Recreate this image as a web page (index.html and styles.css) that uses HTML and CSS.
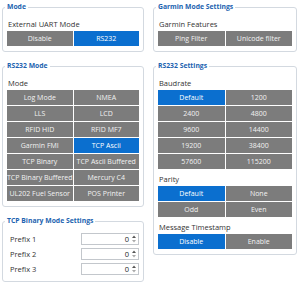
FILE: index.html
```html
<!DOCTYPE html>
<html>
<head>
<meta charset="utf-8">
<link rel="stylesheet" href="styles.css">
</head>
<body>
<div class="page">
  <div class="col left">
    <fieldset class="box">
      <legend>Mode</legend>
      <div class="lbl">External UART Mode</div>
      <div class="grid">
        <div class="btn">Disable</div>
        <div class="btn on">RS232</div>
      </div>
    </fieldset>
    <fieldset class="box">
      <legend>RS232 Mode</legend>
      <div class="lbl">Mode</div>
      <div class="grid">
        <div class="btn">Log Mode</div>
        <div class="btn">NMEA</div>
        <div class="btn">LLS</div>
        <div class="btn">LCD</div>
        <div class="btn">RFID HID</div>
        <div class="btn">RFID MF7</div>
        <div class="btn">Garmin FMI</div>
        <div class="btn on">TCP Ascii</div>
        <div class="btn">TCP Binary</div>
        <div class="btn">TCP Ascii Buffered</div>
        <div class="btn">TCP Binary Buffered</div>
        <div class="btn">Mercury C4</div>
        <div class="btn">UL202 Fuel Sensor</div>
        <div class="btn">POS Printer</div>
      </div>
    </fieldset>
    <fieldset class="box">
      <legend>TCP Binary Mode Settings</legend>
      <div class="rows">
        <div class="row"><span class="rlbl">Prefix 1</span><span class="spin"><span class="val">0</span><svg class="arrows" width="6" height="10" viewBox="0 0 6 10"><path d="M1 4 L3 1.5 L5 4 Z" fill="#555"/><path d="M1 6 L3 8.5 L5 6 Z" fill="#aaa"/></svg></span></div>
        <div class="row"><span class="rlbl">Prefix 2</span><span class="spin"><span class="val">0</span><svg class="arrows" width="6" height="10" viewBox="0 0 6 10"><path d="M1 4 L3 1.5 L5 4 Z" fill="#555"/><path d="M1 6 L3 8.5 L5 6 Z" fill="#aaa"/></svg></span></div>
        <div class="row"><span class="rlbl">Prefix 3</span><span class="spin"><span class="val">0</span><svg class="arrows" width="6" height="10" viewBox="0 0 6 10"><path d="M1 4 L3 1.5 L5 4 Z" fill="#555"/><path d="M1 6 L3 8.5 L5 6 Z" fill="#aaa"/></svg></span></div>
      </div>
    </fieldset>
  </div>
  <div class="col right">
    <fieldset class="box">
      <legend>Garmin Mode Settings</legend>
      <div class="lbl">Garmin Features</div>
      <div class="grid">
        <div class="btn">Ping Filter</div>
        <div class="btn">Unicode filter</div>
      </div>
    </fieldset>
    <fieldset class="box">
      <legend>RS232 Settings</legend>
      <div class="lbl">Baudrate</div>
      <div class="grid">
        <div class="btn on">Default</div>
        <div class="btn">1200</div>
        <div class="btn">2400</div>
        <div class="btn">4800</div>
        <div class="btn">9600</div>
        <div class="btn">14400</div>
        <div class="btn">19200</div>
        <div class="btn">38400</div>
        <div class="btn">57600</div>
        <div class="btn">115200</div>
      </div>
      <div class="lbl">Parity</div>
      <div class="grid">
        <div class="btn on">Default</div>
        <div class="btn">None</div>
        <div class="btn">Odd</div>
        <div class="btn">Even</div>
      </div>
      <div class="lbl">Message Timestamp</div>
      <div class="grid">
        <div class="btn on">Disable</div>
        <div class="btn">Enable</div>
      </div>
    </fieldset>
  </div>
</div>
</body>
</html>
```

FILE: styles.css
```css
html, body {
  margin: 0;
  padding: 0;
  background: #ffffff;
}
body {
  font-family: "Open Sans", "Noto Sans", sans-serif;
  font-size: 7px;
  color: #333333;
}
.page {
  display: flex;
  gap: 9px;
  padding: 1px 0 0 2px;
}
.col {
  display: flex;
  flex-direction: column;
  gap: 8px;
}
.left { width: 142px; }
.right { width: 144px; }
.box {
  margin: 0;
  border: 1px solid #d3d9e0;
  border-radius: 3px;
  padding: 1px 4px 5px;
  min-width: 0;
}
.box legend {
  padding: 0 2px;
  margin-left: -2px;
  font-weight: 700;
  font-size: 6.8px;
  line-height: 12px;
  color: #1c63b0;
}
.lbl {
  margin: 4px 0 1px 1px;
  line-height: 12px;
  font-size: 7.5px;
  color: #333333;
}
.grid {
  display: grid;
  grid-template-columns: 1fr 1fr;
  gap: 1px;
  background: #ffffff;
}
.btn {
  height: 15px;
  line-height: 15px;
  background: #7c7c7c;
  color: #f2f2f2;
  text-align: center;
  white-space: nowrap;
  overflow: hidden;
}
.btn.on {
  background: #0b6fcf;
  color: #ffffff;
}
.rows {
  margin-top: 3px;
}
.row {
  display: flex;
  align-items: center;
  justify-content: space-between;
  height: 15px;
  padding-left: 3px;
}
.rlbl {
  font-size: 7.5px;
}
.spin {
  width: 58px;
  height: 12px;
  box-sizing: border-box;
  border: 1px solid #c3c7cc;
  background: #ffffff;
  display: flex;
  align-items: center;
  justify-content: flex-end;
  gap: 2px;
  padding-right: 1px;
}
.val {
  font-size: 7.5px;
  color: #222222;
  line-height: 10px;
}
.arrows {
  display: block;
}
```
